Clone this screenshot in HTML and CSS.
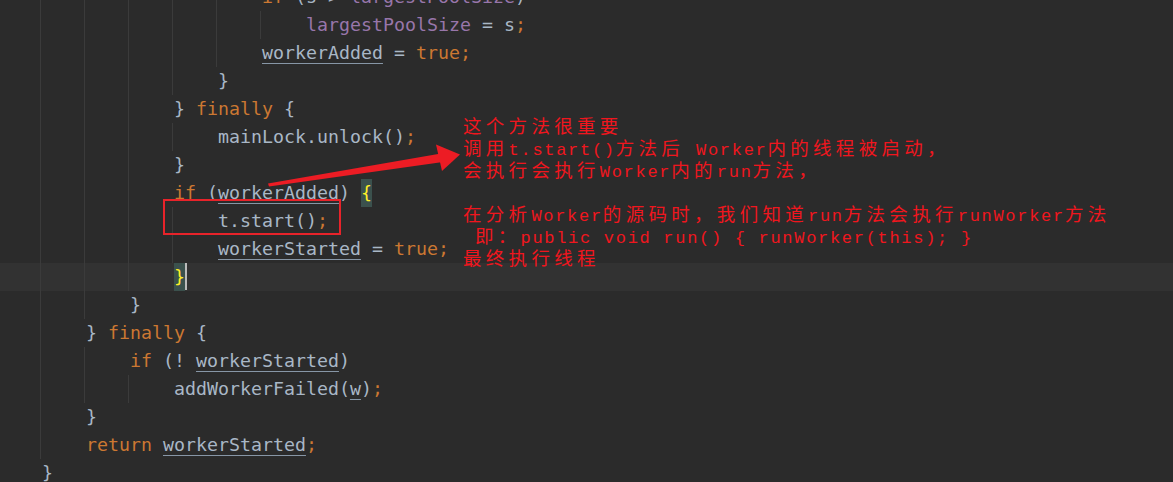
FILE: index.html
```html
<!DOCTYPE html>
<html lang="zh">
<head>
<meta charset="utf-8">
<title>addWorker</title>
<link rel="stylesheet" href="styles.css">
</head>
<body>
<div class="editor">
  <div class="code">
    <div class="ln"><span class="ind"></span><span class="ind"></span><span class="ind"></span><span class="ind"></span><span class="ind"></span><span class="tx"><span class="kw">if</span> (s &gt; <span class="fld">largestPoolSize</span>)</span></div>
    <div class="ln"><span class="ind"></span><span class="ind"></span><span class="ind"></span><span class="ind"></span><span class="ind"></span><span class="ind"></span><span class="tx"><span class="fld">largestPoolSize</span> = s<span class="kw">;</span></span></div>
    <div class="ln"><span class="ind"></span><span class="ind"></span><span class="ind"></span><span class="ind"></span><span class="ind"></span><span class="tx"><span class="u">workerAdded</span> = <span class="kw">true;</span></span></div>
    <div class="ln"><span class="ind"></span><span class="ind"></span><span class="ind"></span><span class="ind"></span><span class="tx">}</span></div>
    <div class="ln"><span class="ind"></span><span class="ind"></span><span class="ind"></span><span class="tx">} <span class="kw">finally</span> {</span></div>
    <div class="ln"><span class="ind"></span><span class="ind"></span><span class="ind"></span><span class="ind"></span><span class="tx">mainLock.unlock()<span class="kw">;</span></span></div>
    <div class="ln"><span class="ind"></span><span class="ind"></span><span class="ind"></span><span class="tx">}</span></div>
    <div class="ln"><span class="ind"></span><span class="ind"></span><span class="ind"></span><span class="tx"><span class="kw">if</span> (<span class="u">workerAdded</span>) <span class="bm">{</span></span></div>
    <div class="ln"><span class="ind"></span><span class="ind"></span><span class="ind"></span><span class="ind"></span><span class="tx">t.start()<span class="kw">;</span></span></div>
    <div class="ln"><span class="ind"></span><span class="ind"></span><span class="ind"></span><span class="ind"></span><span class="tx"><span class="u">workerStarted</span> = <span class="kw">true;</span></span></div>
    <div class="ln cur"><span class="ind"></span><span class="ind"></span><span class="ind"></span><span class="tx"><span class="bm">}</span><span class="caret"></span></span></div>
    <div class="ln"><span class="ind"></span><span class="ind"></span><span class="tx">}</span></div>
    <div class="ln"><span class="ind"></span><span class="tx">} <span class="kw">finally</span> {</span></div>
    <div class="ln"><span class="ind"></span><span class="ind"></span><span class="tx"><span class="kw">if</span> (! <span class="u">workerStarted</span>)</span></div>
    <div class="ln"><span class="ind"></span><span class="ind"></span><span class="ind"></span><span class="tx">addWorkerFailed(<span class="u">w</span>)<span class="kw">;</span></span></div>
    <div class="ln"><span class="ind"></span><span class="tx">}</span></div>
    <div class="ln"><span class="ind"></span><span class="tx"><span class="kw">return</span> <span class="u">workerStarted</span><span class="kw">;</span></span></div>
    <div class="ln"><span class="tx">}</span></div>
  </div>

  <div class="box"></div>

  <svg class="arrow" width="1173" height="482" viewBox="0 0 1173 482">
    <polygon points="268,183.5 441,153.5 443,162 269,186.5" fill="#ec1c24"/>
    <polygon points="436,144.5 460,154.5 442,171" fill="#ec1c24"/>
  </svg>

  <div class="note">
    <div class="nl">这个方法很重要</div>
    <div class="nl">调用<span class="l">t.start()</span>方法后<span class="l"> Worker</span>内的线程被启动，</div>
    <div class="nl">会执行会执行<span class="l">Worker</span>内的<span class="l">run</span>方法，</div>
    <div class="nl"></div>
    <div class="nl">在分析<span class="l">Worker</span>的源码时，我们知道<span class="l">run</span>方法会执行<span class="l">runWorker</span>方法</div>
    <div class="nl"><span class="l"> </span>即：<span class="l">public void run() { runWorker(this); }</span></div>
    <div class="nl">最终执行线程</div>
  </div>
</div>
</body>
</html>
```

FILE: styles.css
```css
html, body {
  margin: 0;
  padding: 0;
  background: #2b2b2b;
}

.editor {
  position: relative;
  width: 1173px;
  height: 482px;
  overflow: hidden;
  background: #2b2b2b;
}

.code {
  margin-top: -17px;
  font-family: "DejaVu Sans Mono", "Liberation Mono", monospace;
  font-size: 18.27px;
  color: #a9b7c6;
}

.ln {
  display: flex;
  height: 28px;
  line-height: 28px;
  padding-left: 40px;
}

.ln.cur {
  background: #323232;
}

.ind {
  flex: none;
  width: 44px;
  height: 28px;
  background: linear-gradient(#3b3b3b, #3b3b3b) no-repeat 0 0 / 1px 100%;
}

.tx {
  display: block;
  padding-left: 2px;
  white-space: pre;
}

.kw {
  color: #cc7832;
}

.fld {
  color: #9876aa;
}

.u {
  text-decoration: underline;
  text-decoration-thickness: 1px;
  text-underline-offset: 4px;
  text-decoration-color: #8796a6;
}

.bm {
  display: inline-block;
  height: 28px;
  vertical-align: top;
  background: #3b514d;
  color: #ffef28;
}

.caret {
  display: inline-block;
  width: 2px;
  height: 27px;
  vertical-align: top;
  background: #bbbbbb;
}

.box {
  position: absolute;
  left: 163px;
  top: 199px;
  width: 178px;
  height: 36px;
  box-sizing: border-box;
  border: 2px solid #e8232a;
}

.arrow {
  position: absolute;
  left: 0;
  top: 0;
  pointer-events: none;
}

.note {
  position: absolute;
  left: 463px;
  top: 114px;
  color: #f0161e;
  font-family: "Noto Sans CJK SC", sans-serif;
  font-size: 18.5px;
  letter-spacing: 4.3px;
}

.nl {
  height: 22px;
  line-height: 22px;
  white-space: pre;
}

.l {
  font-family: "Liberation Mono", "DejaVu Sans Mono", monospace;
  font-size: 17px;
  letter-spacing: 1.7px;
  line-height: 22px;
}
```
